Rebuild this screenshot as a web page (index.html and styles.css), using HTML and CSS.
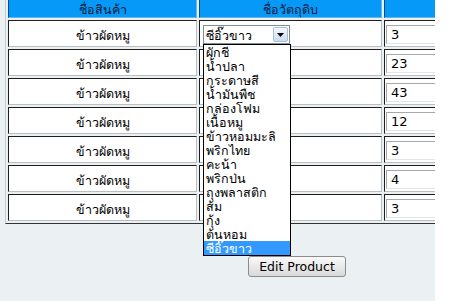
FILE: index.html
```html
<!DOCTYPE html>
<html>
<head>
<meta charset="utf-8">
<link rel="stylesheet" href="styles.css">
</head>
<body>
<div class="viewport">
  <table class="grid">
    <thead>
      <tr><th class="c1">ชื่อสินค้า</th><th class="c2">ชื่อวัตถุดิบ</th><th class="c3"></th></tr>
    </thead>
    <tbody>
      <tr>
        <td class="name">ข้าวผัดหมู</td>
        <td class="ing">
          <div class="select open">
            <span class="sel-text">ซีอิ๊วขาว</span>
            <span class="sel-btn"><svg width="7" height="4" viewBox="0 0 7 4"><path d="M0 0h7L3.5 4z" fill="#000"/></svg></span>
            <ul class="dropdown">
              <li>ผักชี</li>
              <li>น้ำปลา</li>
              <li>กระดาษสี</li>
              <li>น้ำมันพืช</li>
              <li>กล่องโฟม</li>
              <li>เนื้อหมู</li>
              <li>ข้าวหอมมะลิ</li>
              <li>พริกไทย</li>
              <li>คะน้า</li>
              <li>พริกป่น</li>
              <li>ถุงพลาสติก</li>
              <li>ส้ม</li>
              <li>กุ้ง</li>
              <li>ต้นหอม</li>
              <li class="active">ซีอิ๊วขาว</li>
            </ul>
          </div>
        </td>
        <td class="qty-cell"><div class="qty">3</div></td>
      </tr>
      <tr><td class="name">ข้าวผัดหมู</td><td class="ing"></td><td class="qty-cell"><div class="qty">23</div></td></tr>
      <tr><td class="name">ข้าวผัดหมู</td><td class="ing"></td><td class="qty-cell"><div class="qty">43</div></td></tr>
      <tr><td class="name">ข้าวผัดหมู</td><td class="ing"></td><td class="qty-cell"><div class="qty">12</div></td></tr>
      <tr><td class="name">ข้าวผัดหมู</td><td class="ing"></td><td class="qty-cell"><div class="qty">3</div></td></tr>
      <tr><td class="name">ข้าวผัดหมู</td><td class="ing"></td><td class="qty-cell"><div class="qty">4</div></td></tr>
      <tr><td class="name">ข้าวผัดหมู</td><td class="ing"></td><td class="qty-cell"><div class="qty">3</div></td></tr>
    </tbody>
  </table>
  <div class="actions"><button class="btn">Edit Product</button></div>
</div>
</body>
</html>
```
FILE: styles.css
```css
html, body {
  margin: 0;
  padding: 0;
  background: #ffffff;
}
body {
  font-family: "DejaVu Sans", sans-serif;
  font-size: 12px;
  color: #000;
}
.viewport {
  width: 435px;
  height: 301px;
  overflow: hidden;
  background: #ebf1f3;
  padding-left: 5px;
  box-sizing: border-box;
}
.grid {
  margin-top: -4px;
  border-collapse: separate;
  border-spacing: 2px;
  border: 1px solid;
  border-color: #c8cdd0 #333 #333 #c8cdd0;
  table-layout: fixed;
  width: 582px;
}
.grid th, .grid td {
  box-sizing: border-box;
  border: 1px solid;
  border-color: #1e1e1e #b9bec1 #b9bec1 #1e1e1e;
  padding: 0;
  text-align: center;
}
.grid th {
  background: #0799f7;
  border-color: #0a4c8a #5eb6f2 #5eb6f2 #0a4c8a;
  height: 18px;
  padding-top: 3px;
  font-weight: normal;
  font-size: 12.5px;
  line-height: 14px;
  color: #0a1a3a;
}
.c1 { width: 189px; }
.c2 { width: 183px; }
.c3 { width: 200px; }
.grid td {
  background: #fff;
  height: 27px;
}
.grid .name {
  padding-top: 5px;
  font-size: 12.5px;
}
.grid .ing,
.grid .qty-cell {
  text-align: left;
  vertical-align: middle;
  padding-top: 2px;
}
.select {
  position: relative;
  margin-left: 3px;
  width: 87px;
  height: 19px;
  box-sizing: border-box;
  border: 1px solid #7f8e99;
  background: #fff;
  display: flex;
  align-items: center;
  justify-content: space-between;
}
.sel-text {
  padding-left: 2px;
  padding-top: 2px;
  font-size: 12.5px;
  line-height: 15px;
}
.sel-btn {
  width: 15px;
  height: 15px;
  margin-right: 1px;
  box-sizing: border-box;
  border: 1px solid #a9bfd6;
  border-radius: 2px;
  background: linear-gradient(#f4f8fc, #c9dbf0);
  display: flex;
  align-items: center;
  justify-content: center;
}
.dropdown {
  position: absolute;
  top: 18px;
  left: -1px;
  width: 88px;
  margin: 0;
  padding: 0;
  list-style: none;
  background: #fff;
  border: 1px solid #000;
  box-sizing: border-box;
  z-index: 5;
  text-align: left;
}
.dropdown li {
  height: 14px;
  line-height: 15px;
  padding-left: 2px;
  font-size: 12.5px;
  white-space: nowrap;
}
.dropdown li.active {
  background: #3399ff;
  color: #fff;
}
.qty {
  margin-left: 1px;
  height: 19px;
  box-sizing: border-box;
  border: 1px solid;
  border-color: #a5a9ac #e2e5e7 #e2e5e7 #a5a9ac;
  background: #fff;
  padding-left: 4px;
  font-size: 13px;
  line-height: 17px;
}
.actions {
  padding: 32px 0 0 243px;
}
.btn {
  width: 98px;
  height: 21px;
  padding: 0;
  font-family: "DejaVu Sans", sans-serif;
  font-size: 12.5px;
  color: #000;
  background: linear-gradient(#fafafa, #d9d9d9);
  border: 1px solid #8c8c8c;
  border-radius: 3px;
}
```
